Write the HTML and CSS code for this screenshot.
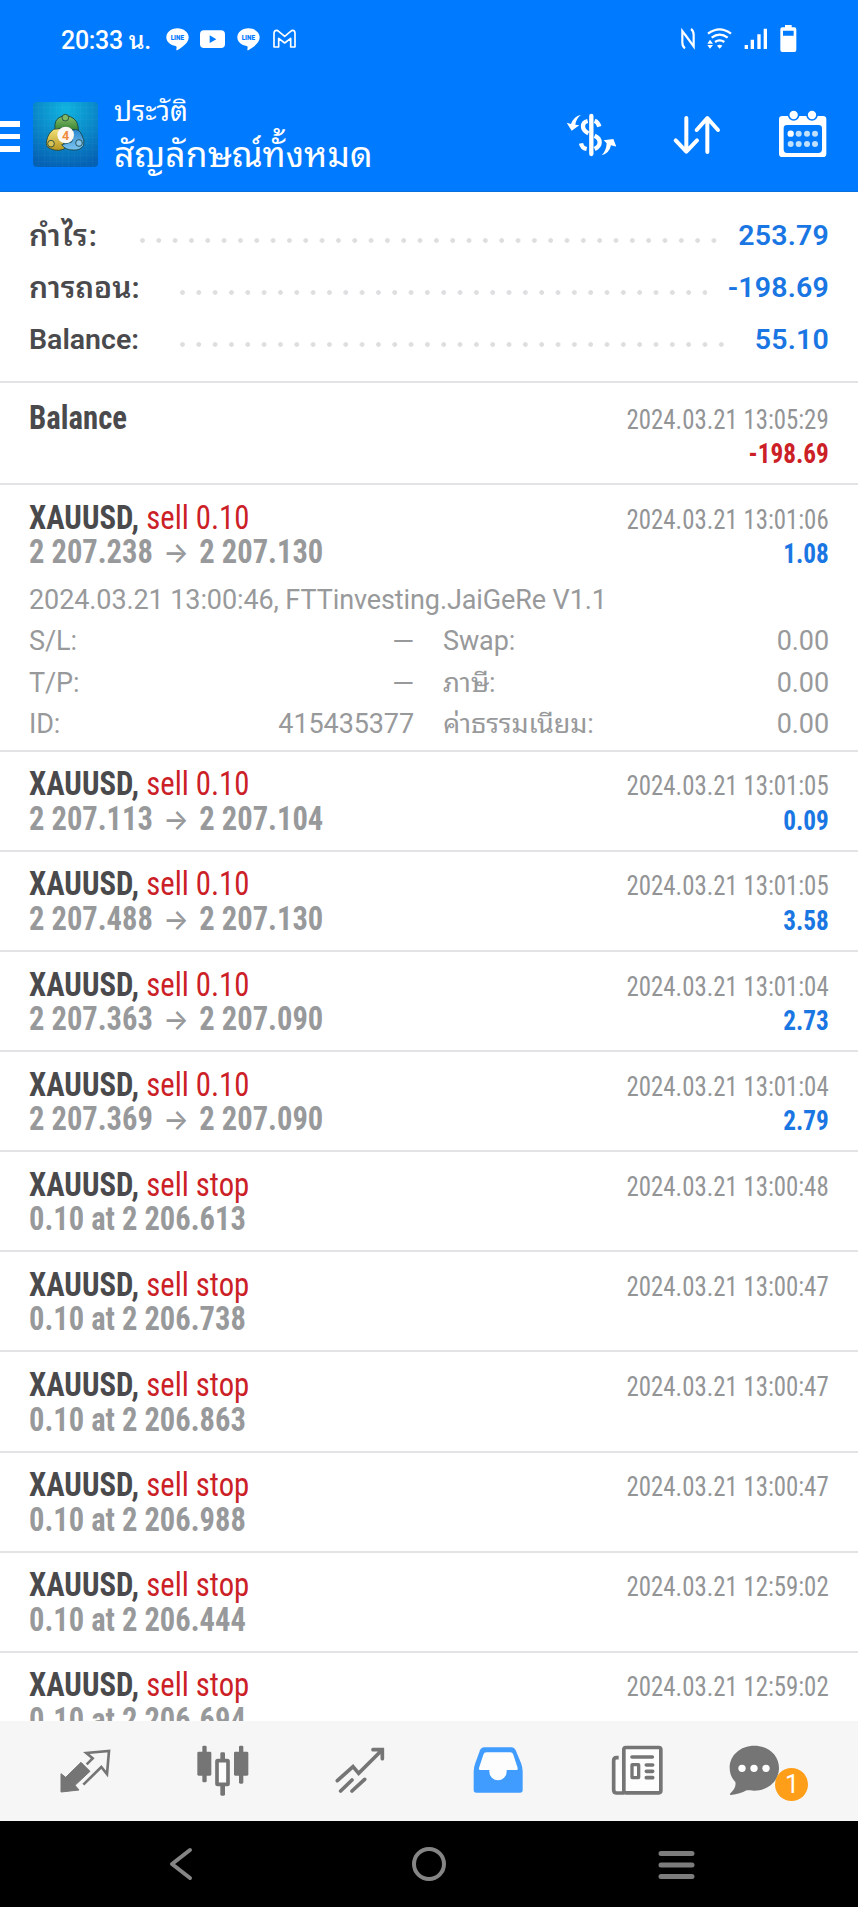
FILE: index.html
```
<!DOCTYPE html>
<html lang="th">
<head>
    <meta charset="UTF-8">
    <meta name="viewport" content="width=device-width, initial-scale=1.0">
    <title>ประวัติ</title>
    <link rel="stylesheet" href="styles.css">
</head>
<body>
    <header class="top">
        <div class="status-bar">
            <span class="clock">20:33 น.</span>
            <svg class="s-line" viewBox="0 0 69 69"><path d="M34 1C15 1 1 13 1 28c0 14 12 24 28 26 4 1 3 4 2 11 0 3 2 2 4 1C52 56 68 44 68 28 68 13 53 1 34 1z" fill="#fff"/><text x="34" y="36" text-anchor="middle">LINE</text></svg>
            <svg class="s-tube" viewBox="0 0 75 69"><rect x="0" y="7" width="75" height="53" rx="12" fill="#fff"/><path d="M29 22v23l20-11.500z" fill="#007aff"/></svg>
            <svg class="s-line" viewBox="0 0 69 69"><path d="M34 1C15 1 1 13 1 28c0 14 12 24 28 26 4 1 3 4 2 11 0 3 2 2 4 1C52 56 68 44 68 28 68 13 53 1 34 1z" fill="#fff"/><text x="34" y="36" text-anchor="middle">LINE</text></svg>
            <svg class="s-mail" viewBox="0 0 69 69"><path fill="none" stroke="#fff" stroke-width="5" stroke-linejoin="round" d="M3 57V16q0-9 8-9 3 0 6 3l18 15 18-15q3-3 6-3 7 0 7 9v41H53V31L35 45 17 31v26z"/></svg>
            <div class="status-right">
                <svg width="14" height="28" viewBox="0 0 42 84"><path d="M12 70Q4 65 4 52V18l28 38M30 12q8 5 8 18v34L12 28" fill="none" stroke="#fff" stroke-width="6.500"/></svg>
                <svg width="25" height="28" viewBox="0 0 75 84"><path d="M3 26Q38 0 72 26M14 38q24-18 48 0M24 51q14-10 28 0" fill="none" stroke="#fff" stroke-width="7"/><path d="M30 62q8-6 16 0l-8 9zM1 56l8-12 9 12zM1 60h17l-9 11z" fill="#fff"/></svg>
                <svg width="24" height="28" viewBox="0 0 72 84"><path d="M2 60h10v12H2zM20 44h10v28H20zM40 28h10v44H40zM59 11h10v61H59z" fill="#fff"/></svg>
                <svg width="17" height="28" viewBox="0 0 51 84"><path fill-rule="evenodd" d="M15 0h20v7h8q6 0 6 6v62q0 6-6 6H7q-6 0-6-6V13q0-6 6-6h8zM9 17v15h32V17z" fill="#fff"/></svg>
            </div>
        </div>
        <div class="app-bar">
            <div class="hamburger"><i></i><i></i><i></i></div>
            <svg class="logo" viewBox="0 0 195 195">
                <defs>
                    <radialGradient id="bg" cx="50%" cy="12%" r="90%"><stop offset="0" stop-color="#0fb4e0"/><stop offset="1" stop-color="#0561b4"/></radialGradient>
                    <linearGradient id="green" x2="0" y2="1"><stop offset="0" stop-color="#8fc36a"/><stop offset="1" stop-color="#2e7d32"/></linearGradient>
                    <linearGradient id="yellow" x2="0" y2="1"><stop offset="0" stop-color="#f3e27a"/><stop offset="1" stop-color="#b7951f"/></linearGradient>
                    <linearGradient id="blue" x2="0" y2="1"><stop offset="0" stop-color="#2c86cf"/><stop offset="1" stop-color="#7cc4ef"/></linearGradient>
                </defs>
                <rect width="195" height="195" rx="12" fill="url(#bg)"/>
                <path d="M16 0v195M34 0v195M52 0v195M70 0v195M88 0v195M106 0v195M124 0v195M142 0v195M160 0v195M178 0v195M0 16h195M0 34h195M0 52h195M0 70h195M0 88h195M0 106h195M0 124h195M0 142h195M0 160h195M0 178h195" stroke="#fff" stroke-opacity=".06" stroke-width="2"/>
                <g stroke="#173f3a" stroke-opacity=".8" stroke-width="3">
                    <path d="M66 82Q62 52 84 44q14-8 28 0 26 10 24 44L98 76z" fill="url(#green)"/>
                    <path d="M62 82q18-6 30 4l-4 30q8 20 14 20-24 16-50 4-16-6-11-24 4-22 21-34z" fill="url(#yellow)"/>
                    <path d="M118 84q20-6 28 14 10 16 6 32-10 16-32 14-24 0-34-16l30-8q8-18 2-36z" fill="url(#blue)"/>
                    <circle cx="97" cy="47" r="10" fill="#7fb968"/>
                    <circle cx="54" cy="125" r="10" fill="#d8c356"/>
                    <circle cx="138" cy="123" r="10" fill="#86c5ee"/>
                </g>
                <circle cx="98" cy="99" r="25" fill="#fbf7f3"/>
                <text x="98" y="113" text-anchor="middle">4</text>
            </svg>
            <div class="titles">
                <div class="subtitle">ประวัติ</div>
                <div class="title">สัญลักษณ์ทั้งหมด</div>
            </div>
            <div class="actions">
                <svg viewBox="0 0 150 150">
                    <path d="M76 18v114" stroke="#fff" stroke-width="13" stroke-linecap="round"/>
                    <path d="M65 33Q51 36 51 49t16 21M86 32q10 4 14 18M86 77q15 7 15 20t-15 20M45 100q3 14 17 17" fill="none" stroke="#fff" stroke-width="13"/>
                    <path d="M45 14Q22 20 15 42L2 38l15 24 23-16-12-2q2-18 17-30zM107 136q23-6 28-30l16 4-9-23-29 4 9 9q-1 22-15 36z" fill="#fff"/>
                </svg>
                <svg viewBox="0 0 150 150"><path d="M43 24v100M11 91l32 34 32-34M106 126V26M74 60l32-36 32 36" fill="none" stroke="#fff" stroke-width="12" stroke-linecap="round" stroke-linejoin="round"/></svg>
                <svg viewBox="0 0 150 150">
                    <path fill-rule="evenodd" d="M13 18h122q10 0 10 10v103q0 10-10 10H13q-10 0-10-10V28q0-10 10-10zM27 45q-10 0-10 10v63q0 11 10 11h94q11 0 11-11V55q0-10-11-10z" fill="#fff"/>
                    <g fill="#fff" stroke="#007aff" stroke-width="5"><circle cx="47" cy="15" r="15"/><circle cx="102" cy="15" r="15"/></g>
                    <g fill="#bfe0ff"><circle cx="38" cy="71" r="9.500" fill="#fff"/><circle cx="62" cy="71" r="9"/><circle cx="87" cy="71" r="9"/><circle cx="111" cy="71" r="9"/><circle cx="38" cy="102" r="9"/><circle cx="62" cy="102" r="9"/><circle cx="87" cy="102" r="9"/><circle cx="111" cy="102" r="9"/></g>
                </svg>
            </div>
        </div>
    </header>

    <section class="summary">
        <div class="sum-row"><span class="th">กำไร:</span><i class="dots"></i><b>253.79</b></div>
        <div class="sum-row"><span class="th">การถอน:</span><i class="dots"></i><b>-198.69</b></div>
        <div class="sum-row"><span>Balance:</span><i class="dots"></i><b>55.10</b></div>
    </section>

    <main class="history">
        <div class="deal balance">
            <div class="line"><span class="symbol">Balance</span><span class="time">2024.03.21 13:05:29</span></div>
            <div class="line right"><span class="profit loss">-198.69</span></div>
        </div>
        <div class="deal open">
            <div class="line"><span class="symbol">XAUUSD, <em>sell 0.10</em></span><span class="time">2024.03.21 13:01:06</span></div>
            <div class="line"><span class="price">2 207.238 <u>→</u> 2 207.130</span><span class="profit">1.08</span></div>
            <div class="details">
                <div class="comment">2024.03.21 13:00:46, FTTinvesting.JaiGeRe V1.1</div>
                <div class="pair"><span>S/L:</span><span class="dash">—</span></div>
                <div class="pair"><span>Swap:</span><span>0.00</span></div>
                <div class="pair"><span>T/P:</span><span class="dash">—</span></div>
                <div class="pair"><span>ภาษี:</span><span>0.00</span></div>
                <div class="pair"><span>ID:</span><span>415435377</span></div>
                <div class="pair"><span>ค่าธรรมเนียม:</span><span>0.00</span></div>
            </div>
        </div>
        <div class="deal">
            <div class="line"><span class="symbol">XAUUSD, <em>sell 0.10</em></span><span class="time">2024.03.21 13:01:05</span></div>
            <div class="line"><span class="price">2 207.113 <u>→</u> 2 207.104</span><span class="profit">0.09</span></div>
        </div>
        <div class="deal">
            <div class="line"><span class="symbol">XAUUSD, <em>sell 0.10</em></span><span class="time">2024.03.21 13:01:05</span></div>
            <div class="line"><span class="price">2 207.488 <u>→</u> 2 207.130</span><span class="profit">3.58</span></div>
        </div>
        <div class="deal">
            <div class="line"><span class="symbol">XAUUSD, <em>sell 0.10</em></span><span class="time">2024.03.21 13:01:04</span></div>
            <div class="line"><span class="price">2 207.363 <u>→</u> 2 207.090</span><span class="profit">2.73</span></div>
        </div>
        <div class="deal">
            <div class="line"><span class="symbol">XAUUSD, <em>sell 0.10</em></span><span class="time">2024.03.21 13:01:04</span></div>
            <div class="line"><span class="price">2 207.369 <u>→</u> 2 207.090</span><span class="profit">2.79</span></div>
        </div>
        <!-- pending orders -->
        <div class="deal">
            <div class="line"><span class="symbol">XAUUSD, <em>sell stop</em></span><span class="time">2024.03.21 13:00:48</span></div>
            <div class="line"><span class="price">0.10 at 2 206.613</span></div>
        </div>
        <div class="deal">
            <div class="line"><span class="symbol">XAUUSD, <em>sell stop</em></span><span class="time">2024.03.21 13:00:47</span></div>
            <div class="line"><span class="price">0.10 at 2 206.738</span></div>
        </div>
        <div class="deal">
            <div class="line"><span class="symbol">XAUUSD, <em>sell stop</em></span><span class="time">2024.03.21 13:00:47</span></div>
            <div class="line"><span class="price">0.10 at 2 206.863</span></div>
        </div>
        <div class="deal">
            <div class="line"><span class="symbol">XAUUSD, <em>sell stop</em></span><span class="time">2024.03.21 13:00:47</span></div>
            <div class="line"><span class="price">0.10 at 2 206.988</span></div>
        </div>
        <div class="deal">
            <div class="line"><span class="symbol">XAUUSD, <em>sell stop</em></span><span class="time">2024.03.21 12:59:02</span></div>
            <div class="line"><span class="price">0.10 at 2 206.444</span></div>
        </div>
        <div class="deal">
            <div class="line"><span class="symbol">XAUUSD, <em>sell stop</em></span><span class="time">2024.03.21 12:59:02</span></div>
            <div class="line"><span class="price">0.10 at 2 206.694</span></div>
        </div>
    </main>

    <nav class="tabs">
        <a class="tab"><svg viewBox="0 0 300 300">
            <path d="M78 213v-55l14 11 46-45 27 27-45 42 12 14z" fill="#757575" stroke="#757575" stroke-width="3" stroke-linejoin="round"/>
            <path d="M155 130l18-18-19-16 68-6-6 69-17-21-54 53" fill="none" stroke="#757575" stroke-width="8"/>
        </svg></a>
        <a class="tab"><svg viewBox="0 0 300 300">
            <g fill="#757575"><rect x="73" y="92" width="42" height="72" rx="4"/><rect x="88" y="74" width="13" height="110" rx="4"/><rect x="183" y="92" width="43" height="72" rx="4"/><rect x="198" y="74" width="13" height="114" rx="4"/><rect x="142" y="94" width="14" height="130" rx="4"/></g>
            <rect x="132" y="119" width="33" height="71" rx="2" fill="#fdfdfd" stroke="#757575" stroke-width="11"/>
        </svg></a>
        <a class="tab"><svg viewBox="0 0 300 300"><path d="M82 179l47-42 17 20 70-70M92 210l34-33M126 210l38-35M189 86h28v27" fill="none" stroke="#757575" stroke-width="11" stroke-linecap="round"/></svg></a>
        <a class="tab"><svg viewBox="0 0 300 300">
            <path d="M77 207v-57q0-10 5-24l14-38q4-9 13-9h81q9 0 13 9l16 38q5 14 5 24v57q0 8-8 8H85q-8 0-8-8z" fill="#409cff"/>
            <path d="M96 147q-4 0-3-6l13-40q2-7 9-7h72q7 0 9 7l13 40q1 6-3 6h-30v5a26 26 0 0 1-52 0v-5z" fill="#fdfdfd"/>
        </svg></a>
        <a class="tab"><svg viewBox="0 0 300 300">
            <path d="M98 110h-6q-9 0-9 9v87q0 10 10 10h22" fill="#fdfdfd" stroke="#757575" stroke-width="11"/>
            <rect x="113.500" y="79.500" width="111" height="136" rx="6" fill="#fdfdfd" stroke="#757575" stroke-width="11"/>
            <rect x="138" y="131" width="20" height="39" rx="1" fill="#fdfdfd" stroke="#757575" stroke-width="10"/>
            <path d="M138 108h61M181 132h19M181 151h19M181 170h19" stroke="#757575" stroke-width="11" stroke-linecap="round"/>
        </svg></a>
        <a class="tab"><svg viewBox="0 0 300 300">
            <path d="M94 74c-42 0-74 29-74 66 0 16 5 30 17 43 3 13-4 24-16 35-1 3 0 4 3 4 19-2 33-6 47-14 7 1 14 1 23 1 42 0 74-30 74-68s-32-67-74-67z" fill="#757575"/>
            <g fill="#fdfdfd"><circle cx="57" cy="142" r="11"/><circle cx="93" cy="142" r="11"/><circle cx="129" cy="142" r="11"/></g>
        </svg><span class="badge">1</span></a>
    </nav>

    <footer class="system-nav">
        <svg viewBox="0 0 40 40"><path d="M29 6L11 20l18 14" fill="none" stroke="#858585" stroke-width="4" stroke-linecap="round" stroke-linejoin="round"/></svg>
        <svg viewBox="0 0 40 40"><circle cx="20" cy="20" r="15" fill="none" stroke="#858585" stroke-width="4"/></svg>
        <svg viewBox="0 0 40 40"><path d="M4 9.500h31M4 21h31M4 32.500h31" stroke="#7c7c7c" stroke-width="5" stroke-linecap="round"/></svg>
    </footer>
</body>
</html>
```
FILE: styles.css
```
* {
    box-sizing: border-box;
}
body {
    margin: 0;
    width: 858px;
    height: 1907px;
    overflow: hidden;
    display: flex;
    flex-direction: column;
    background: #fff;
    font-family: Roboto, "Noto Sans Thai Looped", Loma, Garuda, Waree, "Noto Sans Thai", "Noto Sans", sans-serif;
    color: #4a4a4d;
}
svg {
    display: block;
    flex: none;
}
.top {
    height: 192px;
    background: #007aff;
    border-bottom: 1px solid #0a6fdf;
    color: #fff;
}
.status-bar {
    display: flex;
    align-items: center;
    height: 78px;
    padding: 0 61px 0 61px;
}
.clock {
    width: 105px;
    margin-bottom: 3px;
    font-size: 25px;
    font-weight: 500;
    letter-spacing: -0.3px;
    white-space: nowrap;
}
.s-line {
    width: 23px;
    height: 23px;
}
.s-line text {
    font: 900 19px Roboto, sans-serif;
    fill: #007aff;
}
.s-tube {
    width: 25px;
    height: 23px;
    margin: 0 12px 0 11px;
}
.s-mail {
    width: 23px;
    height: 23px;
    margin-left: 13px;
}
.status-right {
    display: flex;
    gap: 12px;
    margin-left: auto;
}
.app-bar {
    display: flex;
    align-items: flex-start;
    height: 113px;
    padding-top: 24px;
}
.hamburger {
    display: flex;
    flex-direction: column;
    gap: 7px;
    width: 20px;
    margin: 19px 13px 0 0;
}
.hamburger i {
    height: 5.500px;
    background: #fff;
}
.logo {
    width: 65px;
    height: 65px;
}
.logo text {
    font: bold 38px Roboto, sans-serif;
    fill: #ef8a3c;
}
.titles {
    margin-left: 16px;
}
.subtitle {
    font-size: 28px;
    line-height: 30px;
    margin-top: -5px;
}
.title {
    font-size: 35.400px;
    line-height: 46px;
    margin-top: 5px;
    white-space: nowrap;
}
.actions {
    display: flex;
    gap: 56px;
    margin: 8px 30px 0 auto;
}
.actions svg {
    width: 50px;
    height: 50px;
}
.summary {
    height: 191px;
    padding: 18px 29px 0;
    border-bottom: 2px solid #e3e3e5;
}
.sum-row {
    display: flex;
    align-items: center;
    height: 51.800px;
    font-size: 28.500px;
    font-weight: 600;
}
.sum-row span {
    width: 110px;
    white-space: nowrap;
}
.sum-row:first-child span {
    width: 70px;
    letter-spacing: 1px;
}
.sum-row .th {
    margin-bottom: 6px;
    font-size: 30px;
}
.sum-row b {
    font-weight: 600;
    letter-spacing: 0.200px;
    color: #1a76e2;
}
.dots {
    flex: 1;
    height: 5px;
    margin: 10px 21px 0 41px;
    background: radial-gradient(circle at 2.5px 2.5px, #dedee0 2px, transparent 2.7px) 0 0 / 16.330px 5px repeat-x;
}
.sum-row:last-child .dots {
    margin-right: 26px;
}
.history {
    flex: 1;
    min-height: 0;
    overflow: hidden;
    font-stretch: 75%;
}
.deal {
    height: 100.100px;
    padding: 15.500px 29px 0 29px;
    border-bottom: 2px solid #e3e3e5;
}
.deal.balance {
    height: 102.300px;
    padding-top: 17.500px;
}
.deal.open {
    height: 266.600px;
}
.line {
    display: flex;
    justify-content: space-between;
    align-items: baseline;
    height: 34.600px;
    font-size: 33px;
    line-height: 34.600px;
    white-space: nowrap;
}
.line.right {
    justify-content: flex-end;
    padding-top: 2px;
}
/* condensed face is squeezed a bit further */
.symbol {
    font-weight: 700;
    transform: scaleX(0.932);
    transform-origin: left;
}
.symbol em {
    font-style: normal;
    font-weight: 400;
    color: #cc2027;
}
.price {
    font-weight: 700;
    color: #98999b;
    transform: scaleX(0.925);
    transform-origin: left;
}
.price u {
    display: inline-block;
    width: 35px;
    font: 500 29px Inter, sans-serif;
    line-height: 1;
    text-align: center;
    text-decoration: none;
}
.time {
    font-size: 27px;
    color: #939496;
    transform: scaleX(0.92);
    transform-origin: right;
}
.profit {
    font-size: 27px;
    font-weight: 700;
    color: #1a76e2;
    transform: scaleX(0.935);
    transform-origin: right;
}
.profit.loss {
    color: #cc2027;
}
.details {
    display: grid;
    grid-template-columns: 385px 1fr;
    column-gap: 29px;
    margin-top: 10px;
    font-size: 27px;
    font-stretch: 100%;
    line-height: 41.300px;
    letter-spacing: -0.100px;
    color: #98999b;
}
.comment {
    grid-column: 1 / 3;
}
.pair {
    display: flex;
    justify-content: space-between;
    height: 41.300px;
}
.dash {
    font-size: 28px;
}
.tabs {
    display: flex;
    gap: 37.700px;
    height: 100px;
    flex: none;
    padding-left: 35px;
    background: #f6f6f6;
}
.tab {
    position: relative;
    width: 100px;
    flex: none;
}
.badge {
    position: absolute;
    left: 52px;
    top: 47px;
    width: 33px;
    height: 33px;
    border-radius: 50%;
    background: #ff9e18;
    color: #fff;
    font-size: 25px;
    line-height: 33px;
    text-align: center;
}
.system-nav {
    display: grid;
    grid-template-columns: repeat(3, 248px);
    justify-content: center;
    justify-items: center;
    align-items: center;
    height: 86px;
    flex: none;
    background: #000;
}
.system-nav svg {
    width: 40px;
    height: 40px;
}
```
